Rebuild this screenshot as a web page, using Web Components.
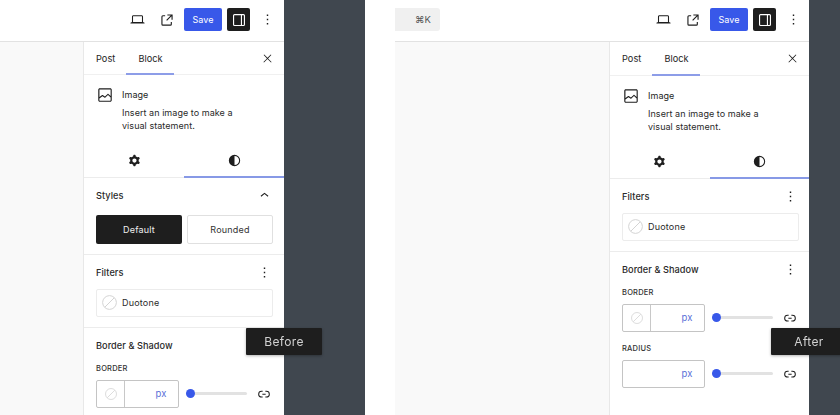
<!DOCTYPE html>
<html lang="en"><head><meta charset="utf-8"><title>Before and After</title>
<style>
html,body{margin:0;height:415px;overflow:hidden;background:#40474f;font-family:Inter,"Liberation Sans",sans-serif;color:#1e1e1e}
#page{display:flex;gap:81px;height:415px;width:840px;overflow:hidden;filter:blur(.35px)}
</style></head><body>
<div id="page">
<wp-frame style="--w:284px;--sw:200px;--tabs:32px;--pr:4px;--pp:11px" label="Before">
  <wp-sidebar>
    <wp-panel title="Styles" action="up" gap="3">
      <wp-style-buttons></wp-style-buttons>
    </wp-panel>
    <wp-panel title="Filters" action="more">
      <wp-duotone></wp-duotone>
    </wp-panel>
    <wp-panel title="Border &amp; Shadow" action="none" tall>
      <wp-unit-row label="BORDER" swatch></wp-unit-row>
    </wp-panel>
  </wp-sidebar>
</wp-frame>
<wp-frame style="--w:444px;--sw:199px;--tabs:33px;--pr:3px;--pp:10px" label="After" search>
  <wp-sidebar>
    <wp-panel title="Filters" action="more">
      <wp-duotone></wp-duotone>
    </wp-panel>
    <wp-panel title="Border &amp; Shadow" action="more" tall last>
      <wp-unit-row label="BORDER" swatch></wp-unit-row>
      <wp-unit-row label="RADIUS" style="margin-top:11px"></wp-unit-row>
    </wp-panel>
  </wp-sidebar>
</wp-frame>
</div>
<script>
const P={
 laptop:'M20.5 16h-.7V8c0-1.1-.9-2-2-2H6.2c-1.1 0-2 .9-2 2v8h-.7c-.8 0-1.5.7-1.5 1.5h20c0-.8-.7-1.5-1.5-1.5zM5.7 8c0-.3.2-.5.5-.5h11.6c.3 0 .5.2.5.5v7.6H5.7V8z',
 external:'M19.5 4.5h-7V6h4.44l-5.97 6.03 1.06 1.06L18 7.06v4.44h1.5v-7Zm-13 1a2 2 0 0 0-2 2v10a2 2 0 0 0 2 2h10a2 2 0 0 0 2-2v-3H17v3a.5.5 0 0 1-.5.5h-10a.5.5 0 0 1-.5-.5v-10a.5.5 0 0 1 .5-.5h3V5.5h-3Z',
 more:'M13 19h-2v-2h2v2zm0-6h-2v-2h2v2zm0-6h-2V5h2v2z',
 close:'M13 11.8l6.1-6.3-1-1-6.1 6.2-6.1-6.2-1 1 6.1 6.3-6.5 6.7 1 1 6.5-6.6 6.5 6.6 1-1z',
 image:'M19 3H5c-1.1 0-2 .9-2 2v14c0 1.1.9 2 2 2h14c1.1 0 2-.9 2-2V5c0-1.1-.9-2-2-2zM5 4.5h14c.3 0 .5.2.5.5v8.4l-3-2.9c-.3-.3-.8-.3-1 0L11.9 14 9 12c-.3-.2-.6-.2-.8 0l-3.6 2.6V5c-.1-.3.1-.5.4-.5zm14 15H5c-.3 0-.5-.2-.5-.5v-2.4l4.1-3 3 1.9c.3.2.7.2.9-.1L16 12l3.5 3.4V19c0 .3-.2.5-.5.5z',
 cog:'M10.289 4.836A1 1 0 0 1 11.275 4h1.306a1 1 0 0 1 .987.836l.244 1.466c.787.26 1.503.679 2.108 1.218l1.393-.522a1 1 0 0 1 1.216.437l.653 1.13a1 1 0 0 1-.23 1.273l-1.148.944a6.025 6.025 0 0 1 0 2.435l1.149.946a1 1 0 0 1 .23 1.272l-.653 1.13a1 1 0 0 1-1.216.437l-1.394-.522c-.605.54-1.32.958-2.108 1.218l-.244 1.466a1 1 0 0 1-.987.836h-1.306a1 1 0 0 1-.986-.836l-.244-1.466a5.995 5.995 0 0 1-2.108-1.218l-1.394.522a1 1 0 0 1-1.217-.436l-.653-1.131a1 1 0 0 1 .23-1.272l1.149-.946a6.026 6.026 0 0 1 0-2.435l-1.148-.944a1 1 0 0 1-.23-1.272l.653-1.131a1 1 0 0 1 1.217-.437l1.393.522a5.994 5.994 0 0 1 2.108-1.218l.244-1.466ZM14.929 12a3 3 0 1 1-6 0 3 3 0 0 1 6 0Z',
 half:'M12 4a8 8 0 1 0 0 16a8 8 0 0 0 0-16zm0 1.5a6.5 6.5 0 0 1 0 13z',
 up:'M6.5 12.4L12 8l5.5 4.4-.9 1.2L12 10l-4.5 3.6-1-1.2z',
 link:'M10 17.389H8.444A5.194 5.194 0 1 1 8.444 7H10v1.5H8.444a3.694 3.694 0 0 0 0 7.389H10v1.5ZM14 7h1.556a5.194 5.194 0 0 1 0 10.39H14v-1.5h1.556a3.694 3.694 0 0 0 0-7.39H14V7Zm-4.5 6h5v-1.5h-5V13Z',
 drawer:'M18 4H6a2 2 0 0 0-2 2v12a2 2 0 0 0 2 2h12a2 2 0 0 0 2-2V6a2 2 0 0 0-2-2ZM5.5 18V6a.5.5 0 0 1 .5-.5h8.5v13H6a.5.5 0 0 1-.5-.5Zm13 0a.5.5 0 0 1-.5.5h-2v-13h2a.5.5 0 0 1 .5.5v12Z'
};
const svg=(n,s,c='currentColor')=>`<svg width="${s}" height="${s}" viewBox="0 0 24 24" fill="${c}" fill-rule="evenodd" style="display:block;flex:none" aria-hidden="true"><path d="${P[n]}"/></svg>`;
const slash=(s,c='#d4d4d4')=>`<svg width="${s}" height="${s}" viewBox="0 0 24 24" fill="none" stroke="${c}" stroke-width="1.6" style="display:block;flex:none" aria-hidden="true"><circle cx="12" cy="12" r="11"/><path d="M4.5 19.5l15-15"/></svg>`;
function def(name,build){customElements.define(name,class extends HTMLElement{connectedCallback(){if(this.shadowRoot)return;this.attachShadow({mode:'open'}).innerHTML=build(this)}})}

def('wp-frame',el=>`<style>
:host{display:flex;flex-direction:column;flex:none;position:relative;width:var(--w);height:415px;background:#fff;box-sizing:border-box;padding-left:${el.hasAttribute('search')?'30px':'0'}}
.top{height:39px;flex:none;display:flex;align-items:center;border-bottom:1px solid #e2e2e2;padding-bottom:2px;background:#fff}
.search{width:45px;height:23px;background:#f0f0f0;border-radius:0 3px 3px 0;box-sizing:border-box;display:flex;align-items:center;justify-content:flex-end;padding-right:9px;font-size:9.5px;color:#555}
.tools{margin-left:auto;display:flex;align-items:center;padding-right:var(--pr)}
.tools>.i{width:29px;display:flex;justify-content:center;color:#1e1e1e}
.save{width:38px;height:23px;margin-left:3px;background:#3858e9;color:#fff;border-radius:2px;display:flex;align-items:center;justify-content:center;font-size:9px}
.toggle{width:23px;height:23px;margin-left:5px;background:#1e1e1e;color:#fff;border-radius:2px;display:flex;align-items:center;justify-content:center}
.dots{width:26px;margin-left:4px;display:flex;justify-content:center;color:#1e1e1e}
.body{flex:1;display:flex;min-height:0}
.canvas{flex:1;background:#f9f9f9}
.tip{position:absolute;right:-38px;top:328px;width:76px;height:27px;background:#1e1e1e;color:#d2d2d2;font-size:12px;letter-spacing:.35px;display:flex;align-items:center;justify-content:center;border-radius:1px;box-shadow:0 1px 3px rgba(0,0,0,.3)}
</style>
<div class="top">${el.hasAttribute('search')?'<div class="search">⌘K</div>':''}<div class="tools"><span class="i">${svg('laptop',17)}</span><span class="i">${svg('external',18)}</span><div class="save">Save</div><div class="toggle">${svg('drawer',18)}</div><span class="dots">${svg('more',17)}</span></div></div>
<div class="body"><div class="canvas"></div><slot></slot></div>
<div class="tip">${el.getAttribute('label')}</div>`);

def('wp-sidebar',()=>`<style>
:host{display:block;width:var(--sw);flex:none;border-left:1px solid #e8e8e8;background:#fff;font-size:9px;letter-spacing:.05px;height:100%;overflow:hidden}
.tabs{height:var(--tabs);display:flex;align-items:center;border-bottom:1px solid #f0f0f0;padding-left:12px;position:relative}
.tab{font-size:9.2px;color:#1e1e1e}
.tab.b{margin-left:23px}
.tabs::after{content:"";position:absolute;left:42px;width:48px;bottom:-1px;background:#8d9de8;height:2px}
.x{margin-left:auto;margin-right:10px;color:#1e1e1e}
.card{display:flex;gap:8px;padding:11px 12px 0 12px;height:58px}
.card b{font-weight:400;display:block;line-height:13px;margin-top:2px}
.card p{margin:5px 0 0;line-height:13px;color:#2a2a2a}
.sub{height:33px;display:grid;grid-template-columns:1fr 1fr;border-bottom:1px solid #ececec;position:relative}
.sub div{display:flex;align-items:center;justify-content:center}
.sub::after{content:"";position:absolute;left:50%;right:0;bottom:-1px;height:2px;background:#8799e6}
</style>
<div class="tabs"><span class="tab">Post</span><span class="tab b">Block</span><span class="x">${svg('close',13)}</span></div>
<div class="card">${svg('image',18)}<div><b>Image</b><p>Insert an image to make a<br>visual statement.</p></div></div>
<div class="sub"><div>${svg('cog',17)}</div><div>${svg('half',17)}</div></div>
<slot></slot>`);

def('wp-panel',el=>{const a=el.getAttribute('action');return `<style>
:host{display:block;border-bottom:${el.hasAttribute('last')?'0':'1px solid #ececec'};padding:0 var(--pp) 10px 12px}
.h{display:flex;align-items:center;justify-content:space-between;height:${el.hasAttribute('tall')?35:34}px;margin-bottom:${el.getAttribute('gap')||0}px;font-weight:500;font-size:9.2px;letter-spacing:.05px;color:#2a2a2a}
.a{color:#1e1e1e;display:flex}
</style>
<div class="h"><span>${el.getAttribute('title')}</span>${a==='none'?'':`<span class="a">${svg(a,17)}</span>`}</div><slot></slot>`});

def('wp-style-buttons',()=>`<style>
:host{display:grid;grid-template-columns:86px 86px;gap:5px;height:29px}
div{display:flex;align-items:center;justify-content:center;font-size:9px;letter-spacing:.2px;border-radius:2px;box-sizing:border-box}
.on{background:#1e1e1e;color:#eee}
.off{background:#fff;border:1px solid #e0e0e0;color:#333}
</style><div class="on">Default</div><div class="off">Rounded</div>`);

def('wp-duotone',()=>`<style>
:host{display:flex;align-items:center;gap:5px;height:27.5px;margin-bottom:.5px;width:177px;box-sizing:border-box;border:1px solid #ececec;border-radius:2px;padding-left:5px;font-size:9px;letter-spacing:.2px;color:#2a2a2a}
</style>${slash(15)}<span>Duotone</span>`);

def('wp-unit-row',el=>`<style>
:host{display:block}
.l{font-size:7.5px;letter-spacing:.2px;font-weight:500;color:#333;height:11px;line-height:11px;margin:0 0 5.5px}
.r{display:flex;align-items:center}
.box{width:82.5px;height:28.5px;box-sizing:border-box;border:1px solid #c4c4c4;border-radius:2px;display:flex;align-items:stretch}
.sw{width:28px;flex:none;border-right:1.5px solid #c8c8c8;display:flex;align-items:center;justify-content:center;box-sizing:border-box}
.u{flex:1;display:flex;align-items:center;justify-content:flex-end;padding-right:11px;color:#5a70d8;font-size:9.5px}
.s{margin-left:7.5px;width:61px;height:3px;background:#e2e2e2;border-radius:2px;position:relative}
.s::before{content:"";position:absolute;left:0;top:-3px;width:9px;height:9px;border-radius:50%;background:#3858e9}
.k{margin-left:9px;color:#1e1e1e;display:flex}
</style><div class="l">${el.getAttribute('label')}</div><div class="r"><div class="box">${el.hasAttribute('swatch')?`<div class="sw">${slash(12)}</div>`:''}<div class="u">px</div></div><div class="s"></div><span class="k">${svg('link',16)}</span></div>`);
</script>
</body></html>
